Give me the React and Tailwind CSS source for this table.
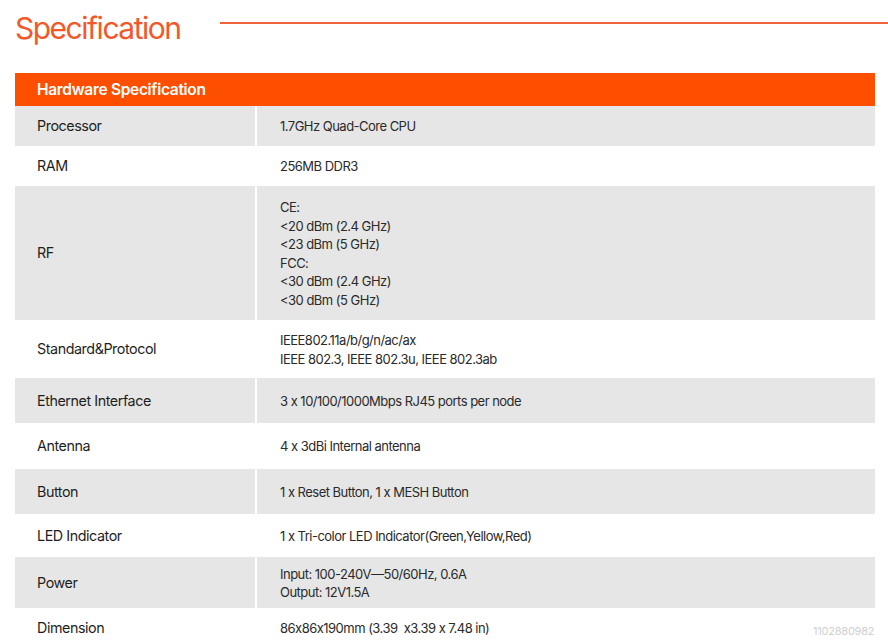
const specs = [
  { label: "Processor", value: ["1.7GHz Quad-Core CPU"], h: "h-[40px]" },
  { label: "RAM", value: ["256MB DDR3"], h: "h-[40px]" },
  {
    label: "RF",
    value: ["CE:", "<20 dBm (2.4 GHz)", "<23 dBm (5 GHz)", "FCC:", "<30 dBm (2.4 GHz)", "<30 dBm (5 GHz)"],
    h: "h-[134px]",
  },
  { label: "Standard&Protocol", value: ["IEEE802.11a/b/g/n/ac/ax", "IEEE 802.3, IEEE 802.3u, IEEE 802.3ab"], h: "h-[58px]" },
  { label: "Ethernet Interface", value: ["3 x 10/100/1000Mbps RJ45 ports per node"], h: "h-[45px]" },
  { label: "Antenna", value: ["4 x 3dBi Internal antenna"], h: "h-[46px]" },
  { label: "Button", value: ["1 x Reset Button, 1 x MESH Button"], h: "h-[45px]" },
  { label: "LED Indicator", value: ["1 x Tri-color LED Indicator(Green,Yellow,Red)"], h: "h-[43px]" },
  { label: "Power", value: ["Input: 100-240V\u201450/60Hz, 0.6A", "Output: 12V1.5A"], h: "h-[51px]" },
  { label: "Dimension", value: ["86x86x190mm (3.39  x3.39 x 7.48 in)"], h: "h-[40px]" },
]

export default function App() {
  return (
    <div className="relative h-[644px] w-[888px] overflow-hidden bg-white font-['Inter',sans-serif]">
      {/* Title */}
      <div className="flex h-[73px] items-start">
        <h1 className="ml-[15px] mt-[9px] w-[164px] whitespace-nowrap text-[30px] leading-[38px] tracking-[-0.05em] text-[#f2582a]">
          Specification
        </h1>
        <div className="ml-[41px] mt-[22px] h-[2px] flex-1 bg-[#f0643c]" />
      </div>

      {/* Table */}
      <div className="mx-[15px] w-[860px]">
        <div className="flex h-[33px] items-center bg-[#fe4f00] pl-[22px] text-[15.5px] font-semibold tracking-[-0.02em] text-white">
          Hardware Specification
        </div>
        {specs.map((row, i) => (
          <div
            key={row.label}
            className={`flex ${row.h} ${i % 2 === 0 ? "bg-[#e6e6e6]" : "bg-white"}`}
          >
            <div className="flex w-[242px] items-center border-r-2 border-white pl-[22px] text-[14.3px] tracking-[-0.03em] text-[#1e1e1e]">
              {row.label}
            </div>
            <div className="flex flex-col justify-center pl-[23px] pt-[1px] text-[13px] leading-[18.5px] tracking-[-0.04em] text-[#2a2a2a]">
              {row.value.map((v) => (
                <div key={v} className="whitespace-pre">{v}</div>
              ))}
            </div>
          </div>
        ))}
      </div>

      <div className="absolute left-[813px] top-[623px] text-[11px] tracking-[-0.02em] text-[#cfcfcf]">
        1102880982
      </div>
    </div>
  )
}
